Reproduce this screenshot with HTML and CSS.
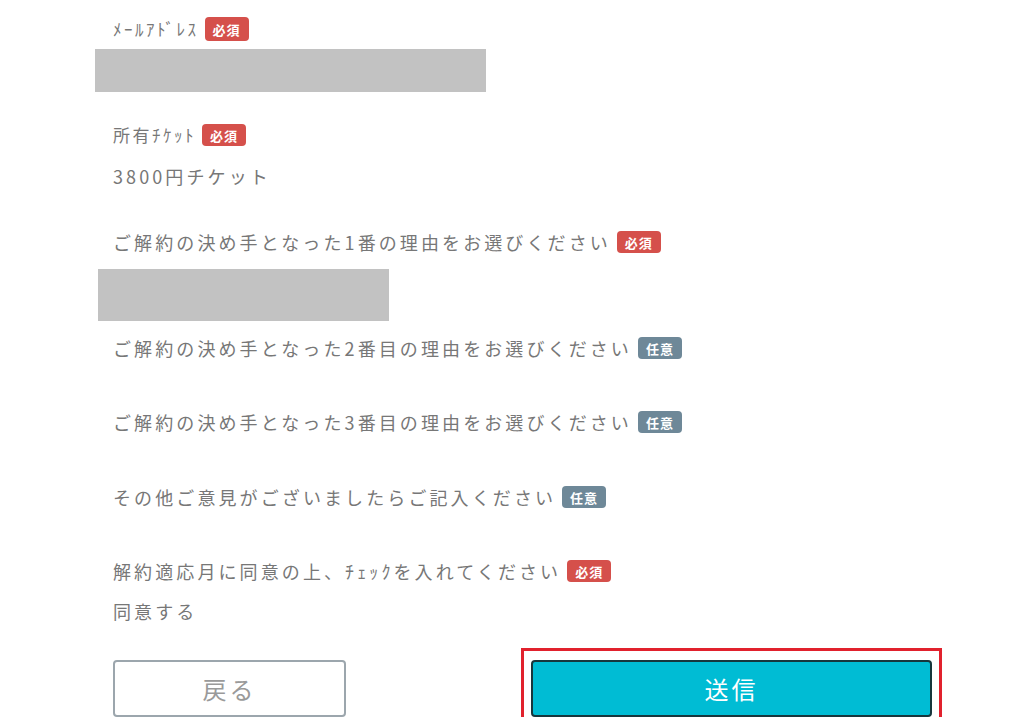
FILE: index.html
```html
<!DOCTYPE html>
<html lang="ja">
<head>
<meta charset="utf-8">
<title>解約フォーム</title>
<link rel="stylesheet" href="styles.css">
</head>
<body>
<div class="form">
  <div class="row r-mail"><span class="label small">ﾒｰﾙｱﾄﾞﾚｽ</span><span class="badge req">必須</span></div>
  <div class="mask mask-mail"></div>
  <div class="row r-ticket"><span class="label small">所有ﾁｹｯﾄ</span><span class="badge req">必須</span></div>
  <div class="row r-value"><span class="label">3800円チケット</span></div>
  <div class="row r-q1"><span class="label">ご解約の決め手となった1番の理由をお選びください</span><span class="badge req">必須</span></div>
  <div class="mask mask-q1"></div>
  <div class="row r-q2"><span class="label">ご解約の決め手となった2番目の理由をお選びください</span><span class="badge opt">任意</span></div>
  <div class="row r-q3"><span class="label">ご解約の決め手となった3番目の理由をお選びください</span><span class="badge opt">任意</span></div>
  <div class="row r-other"><span class="label">その他ご意見がございましたらご記入ください</span><span class="badge opt">任意</span></div>
  <div class="row r-agree"><span class="label">解約適応月に同意の上、ﾁｪｯｸを入れてください</span><span class="badge req">必須</span></div>
  <div class="row r-check"><span class="label">同意する</span></div>
  <div class="buttons">
    <button class="btn back" type="button">戻る</button>
    <button class="btn send" type="button">送信</button>
  </div>
</div>
</body>
</html>
```
FILE: styles.css
```css
html, body {
  margin: 0;
  padding: 0;
  background: #ffffff;
}
body {
  font-family: "Noto Sans CJK JP", "Noto Sans", sans-serif;
  color: #777777;
}
.form {
  display: flex;
  flex-direction: column;
  align-items: flex-start;
  padding-left: 113px;
  padding-top: 17px;
}
.row {
  display: flex;
  align-items: center;
  height: 22px;
}
.label {
  font-size: 18px;
  letter-spacing: 3.1px;
  line-height: 22px;
  white-space: nowrap;
}
.label.small {
  font-size: 17px;
  letter-spacing: 2.5px;
}
.badge {
  display: inline-flex;
  align-items: center;
  justify-content: center;
  width: 44px;
  height: 22px;
  border-radius: 4px;
  color: #ffffff;
  font-size: 13px;
  font-weight: 700;
  letter-spacing: 1px;
  margin-left: 6px;
}
.badge.req { background: #d5504b; }
.badge.opt { background: #6e8898; }
.r-mail { height: 24px; }
.r-mail .badge { height: 24px; }
.mask {
  background: #c2c2c2;
}
.mask-mail {
  margin-top: 8px;
  margin-left: -18px;
  width: 391px;
  height: 43px;
}
.r-ticket { margin-top: 32px; }
.r-value { margin-top: 18px; height: 24px; }
.r-q1 { margin-top: 43px; }
.mask-q1 {
  margin-top: 16px;
  margin-left: -15px;
  width: 291px;
  height: 52px;
}
.r-q2 { margin-top: 16px; }
.r-q3 { margin-top: 52px; }
.r-other { margin-top: 53px; }
.r-agree { margin-top: 52px; }
.r-check { margin-top: 17px; height: 24px; }
.buttons {
  display: flex;
  gap: 185px;
  margin-top: 37px;
}
.btn {
  font-family: "Noto Sans CJK JP", "Noto Sans", sans-serif;
  font-size: 24px;
  letter-spacing: 3px;
  height: 57px;
  border-radius: 4px;
  cursor: pointer;
  padding: 0;
}
.back {
  width: 233px;
  background: #ffffff;
  border: 2px solid #9ca6ad;
  color: #9a9a9a;
}
.send {
  position: relative;
  width: 401px;
  background: #00bcd4;
  border: 2px solid #17363c;
  color: #ffffff;
}
.send::after {
  content: "";
  position: absolute;
  top: -14px;
  bottom: -8px;
  left: -12px;
  right: -12px;
  border: 3px solid #e1212d;
  pointer-events: none;
}
```
